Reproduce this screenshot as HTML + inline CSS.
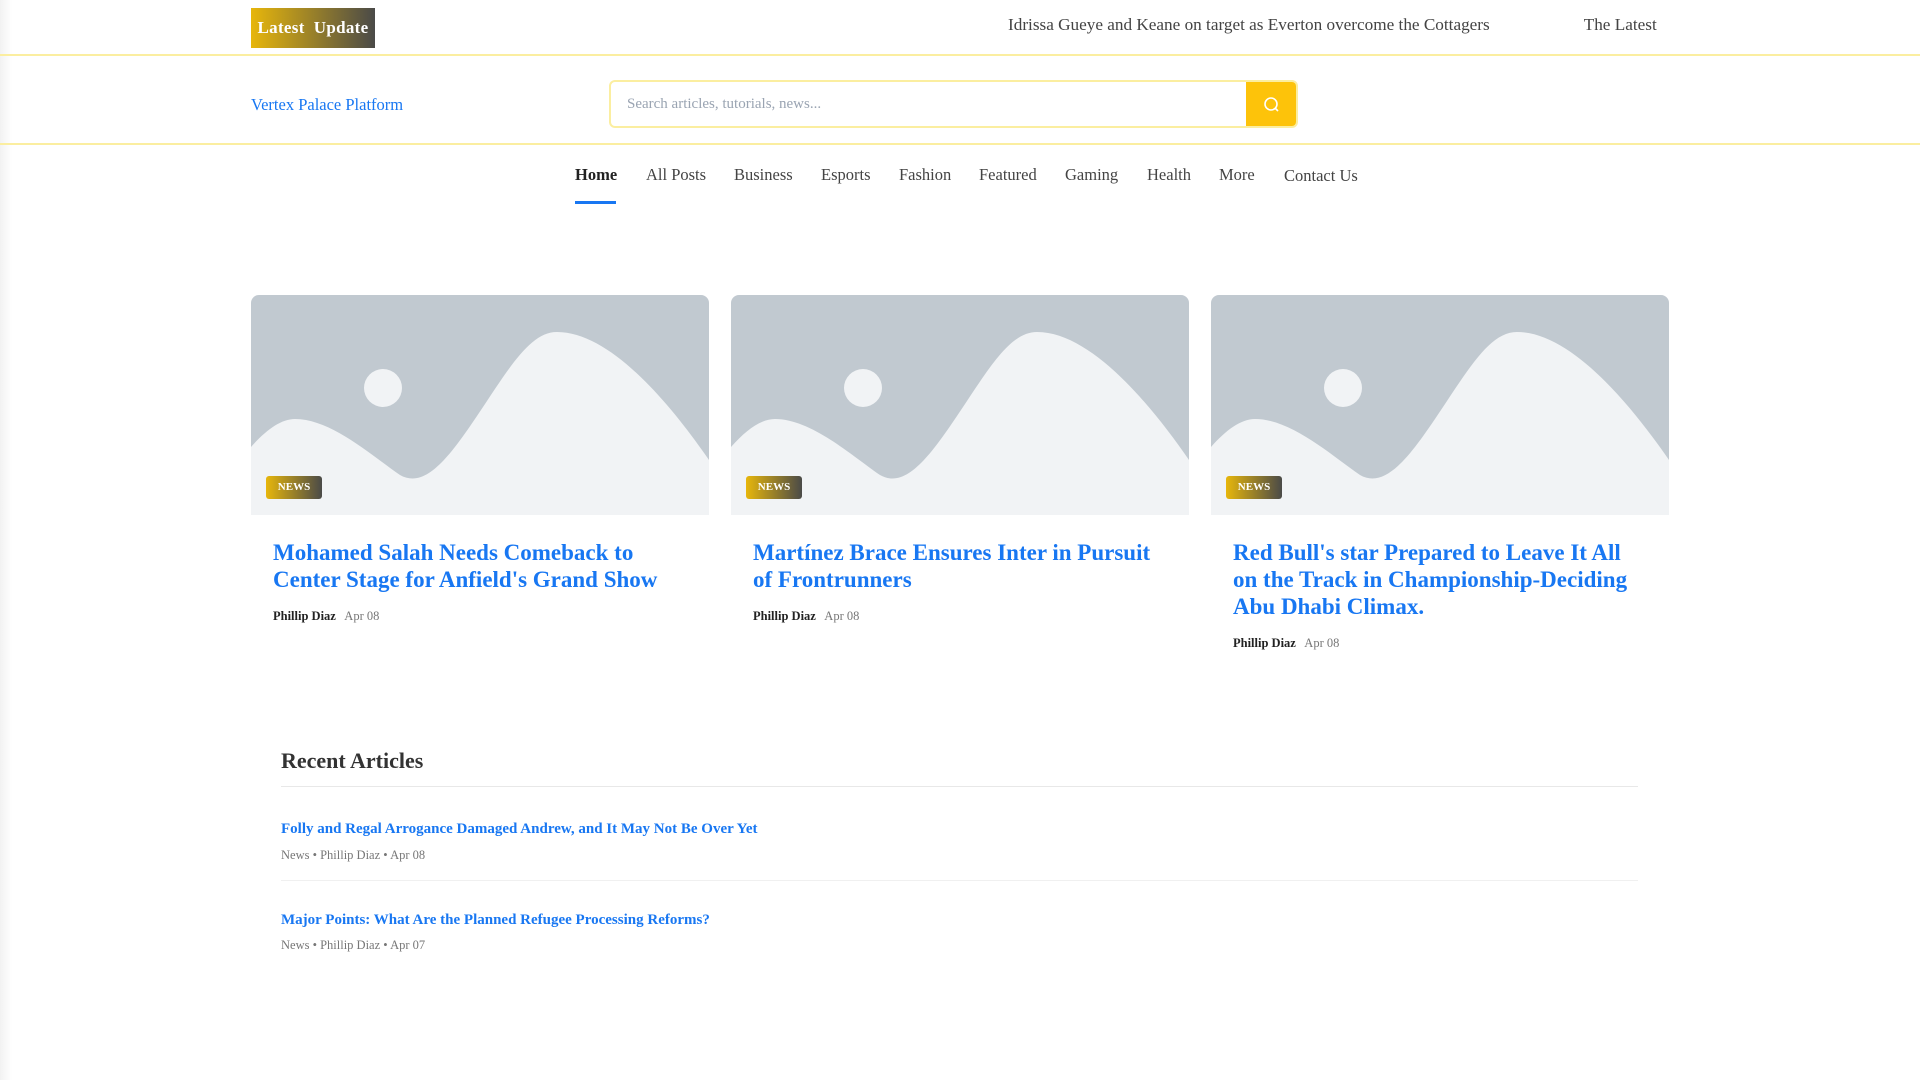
<!DOCTYPE html>
<html><head><meta charset="utf-8"><style>
*{box-sizing:border-box;margin:0;padding:0}
body{width:1920px;height:1080px;overflow:hidden;background:#fff;font-family:"Liberation Serif",serif;position:relative}
.shadow{position:absolute;left:0;top:0;width:12px;height:1080px;background:linear-gradient(90deg,rgba(0,0,0,.05),rgba(0,0,0,0))}
.top{position:absolute;left:0;top:0;width:1920px;height:56px;border-bottom:2px solid #fbeea0}
.lu{position:absolute;left:251px;top:8px;width:124px;height:40px;background:linear-gradient(90deg,#e7b60b,#4a4a48);color:#fff;font-size:17px;font-weight:bold;line-height:40px;text-align:center;letter-spacing:.3px}
.tick{position:absolute;left:1008px;top:15px;width:651px;overflow:hidden;white-space:nowrap;font-size:17.2px;color:#444;}
.hdr{position:absolute;left:0;top:56px;width:1920px;height:89px;border-bottom:2px solid #fbeea0}
.logo{position:absolute;left:251px;top:39px;font-size:16.5px;color:#1877f2}
.search{position:absolute;left:609px;top:24px;width:689px;height:48px;border:2px solid #fbeea0;border-radius:6px;overflow:hidden}
.search span{position:absolute;left:16px;top:14px;font-size:15px;color:#9aa4b2}
.search .btn{position:absolute;right:0;top:0;width:50px;height:44px;background:#fdc30a}
.nav{position:absolute;top:165px;left:575px;font-size:16.5px;color:#444;white-space:nowrap}
.nav a{position:absolute;top:0}
.ul{position:absolute;left:575px;top:201px;width:41px;height:3px;background:#1877f2}
.card{position:absolute;top:295px;width:458px}
.img{position:relative;width:458px;height:220px;border-radius:8px 8px 0 0;overflow:hidden;background:#c1c9d0}
.badge{position:absolute;left:15px;top:181px;width:56px;height:23px;border-radius:3px;background:linear-gradient(90deg,#e7b60b,#4a4a48);color:#fff;font-size:11px;font-weight:bold;text-align:center;line-height:23px}
.t{margin:24px 22px 0;font-size:23px;line-height:27px;font-weight:bold;color:#1877f2}
.m{margin:16px 22px 0;font-size:12.5px;color:#777}
.m b{color:#222;margin-right:6px}
.ra{position:absolute;left:281px;top:748px;font-size:22px;font-weight:bold;color:#333}
.ln{position:absolute;left:281px;width:1357px;height:1px;background:#e8e8e8}
.it{position:absolute;left:281px;font-size:15px;font-weight:bold;color:#1877f2}
.im{position:absolute;left:281px;font-size:12.5px;color:#777}
</style></head><body>
<div class="shadow"></div>
<div class="top"><div class="lu">Latest&nbsp; Update</div>
<div class="tick">Idrissa Gueye and Keane on target as Everton overcome the Cottagers<span style="display:inline-block;width:94px"></span>The Latest</div></div>
<div class="hdr"><div class="logo">Vertex Palace Platform</div>
<div class="search"><span>Search articles, tutorials, news...</span><div class="btn"><svg width="50" height="44" viewBox="0 0 50 44"><circle cx="25" cy="22" r="6" fill="none" stroke="#fff" stroke-width="1.6"/><line x1="29.5" y1="26.5" x2="32" y2="29" stroke="#fff" stroke-width="1.6"/></svg></div></div></div>
<div class="nav">
<a style="left:0;font-weight:bold;color:#222">Home</a><a style="left:71px">All Posts</a><a style="left:159px">Business</a><a style="left:246px">Esports</a><a style="left:324px">Fashion</a><a style="left:404px">Featured</a><a style="left:490px">Gaming</a><a style="left:572px">Health</a><a style="left:644px">More</a><a style="left:709px;top:1px">Contact Us</a></div>
<div class="ul"></div>

<div class="card" style="left:251px"><div class="img"><svg width="458" height="220"><circle cx="132" cy="93" r="19" fill="#f1f3f5"/><path d="M0 152 C15 135 30 124 44 124 C80 124 120 160 149 180 C175 195 200 160 230 115 C260 70 280 37 306 37 C360 37 420 110 458 165 L458 220 L0 220Z" fill="#f1f3f5"/></svg><div class="badge">NEWS</div></div>
<div class="t">Mohamed Salah Needs Comeback to Center Stage for Anfield's Grand Show</div><div class="m"><b>Phillip Diaz</b> Apr 08</div></div>

<div class="card" style="left:731px"><div class="img"><svg width="458" height="220"><circle cx="132" cy="93" r="19" fill="#f1f3f5"/><path d="M0 152 C15 135 30 124 44 124 C80 124 120 160 149 180 C175 195 200 160 230 115 C260 70 280 37 306 37 C360 37 420 110 458 165 L458 220 L0 220Z" fill="#f1f3f5"/></svg><div class="badge">NEWS</div></div>
<div class="t">Martínez Brace Ensures Inter in Pursuit of Frontrunners</div><div class="m"><b>Phillip Diaz</b> Apr 08</div></div>

<div class="card" style="left:1211px"><div class="img"><svg width="458" height="220"><circle cx="132" cy="93" r="19" fill="#f1f3f5"/><path d="M0 152 C15 135 30 124 44 124 C80 124 120 160 149 180 C175 195 200 160 230 115 C260 70 280 37 306 37 C360 37 420 110 458 165 L458 220 L0 220Z" fill="#f1f3f5"/></svg><div class="badge">NEWS</div></div>
<div class="t">Red Bull's star Prepared to Leave It All on the Track in Championship-Deciding Abu Dhabi Climax.</div><div class="m"><b>Phillip Diaz</b> Apr 08</div></div>

<div class="ra">Recent Articles</div>
<div class="ln" style="top:786px"></div>
<div class="it" style="top:821px">Folly and Regal Arrogance Damaged Andrew, and It May Not Be Over Yet</div>
<div class="im" style="top:848px">News • Phillip Diaz • Apr 08</div>
<div class="ln" style="top:880px;background:#f0f0f0"></div>
<div class="it" style="top:912px">Major Points: What Are the Planned Refugee Processing Reforms?</div>
<div class="im" style="top:938px">News • Phillip Diaz • Apr 07</div>
</body></html>
